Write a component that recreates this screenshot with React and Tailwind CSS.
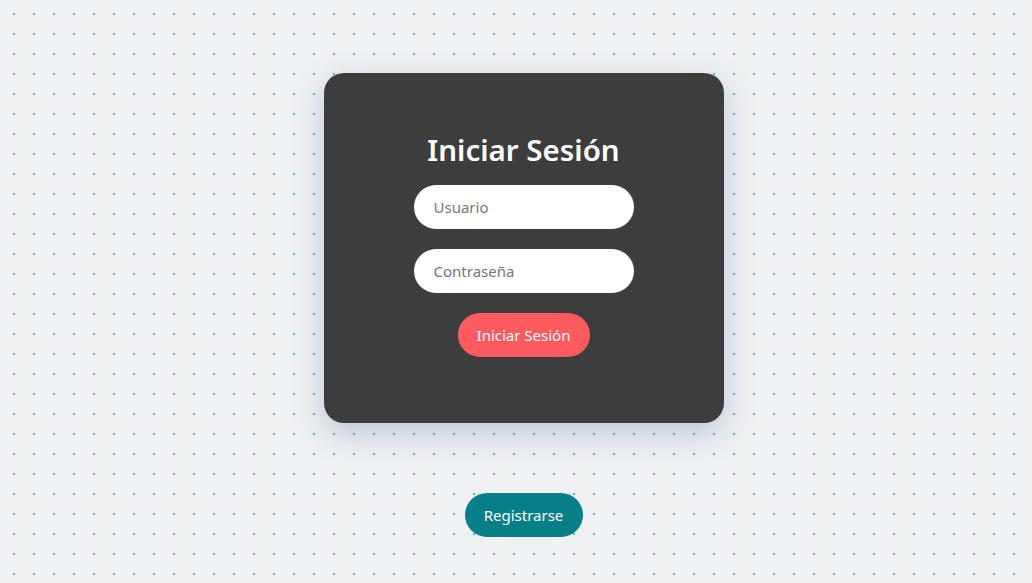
import React, { useState } from 'react';

export default function App() {
  const [user, setUser] = useState('');
  const [pass, setPass] = useState('');

  return (
    <div
      className="min-h-screen w-full bg-[#eff1f3] bg-[radial-gradient(circle,#4cb8c2_1px,transparent_1.2px)] bg-[size:20px_20px] bg-[position:4px_4px] flex flex-col items-center pt-[73px] pl-[15px]"
      style={{ fontFamily: '"Noto Sans", "Open Sans", sans-serif' }}
    >
      {/* tarjeta de login */}
      <div className="w-[400px] h-[350px] rounded-[20px] bg-[#3d3d3d] shadow-[0_10px_30px_rgba(100,120,160,0.35)] flex flex-col items-center pt-[59px]">
        <h1 className="text-white text-[29.5px] leading-[36px] font-semibold mb-[17px]">Iniciar Sesión</h1>
        <input
          value={user}
          onChange={e => setUser(e.target.value)}
          placeholder="Usuario"
          className="w-[220px] h-[44px] rounded-full bg-white px-5 text-[15px] text-[#333] placeholder:text-[#767676] outline-none"
        />
        <input
          type="password"
          value={pass}
          onChange={e => setPass(e.target.value)}
          placeholder="Contraseña"
          className="mt-5 w-[220px] h-[44px] rounded-full bg-white px-5 text-[15px] text-[#333] placeholder:text-[#767676] outline-none"
        />
        <button className="mt-5 w-[132px] h-[44px] rounded-full bg-[#ff5a5f] text-white text-[15px]">
          Iniciar Sesión
        </button>
      </div>

      <button className="mt-[70px] w-[118px] h-[44px] rounded-full bg-[#077f89] text-white text-[15px]">
        Registrarse
      </button>
    </div>
  );
}
